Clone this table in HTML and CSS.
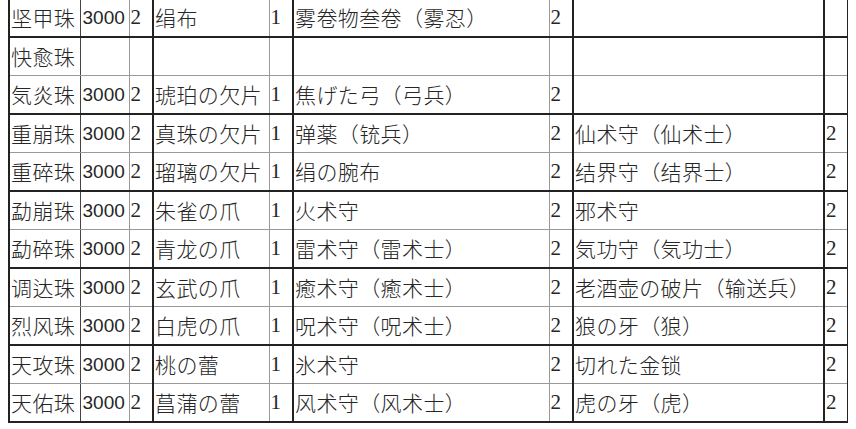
FILE: index.html
```html
<!DOCTYPE html>
<html lang="ja">
<head>
<meta charset="utf-8">
<title>珠</title>
<link rel="stylesheet" href="styles.css">
</head>
<body>
<table class="grid">
<colgroup>
<col class="c1"><col class="c2"><col class="c3"><col class="c4"><col class="c5"><col class="c6"><col class="c7"><col class="c8"><col class="c9">
</colgroup>
<tbody>
<tr class="dk"><td>坚甲珠</td><td class="n">3000</td><td class="d">2</td><td>绢布</td><td class="d">1</td><td>雾卷物叁卷（雾忍）</td><td class="d">2</td><td></td><td class="d"></td></tr>
<tr class="lt"><td>快愈珠</td><td class="n"></td><td class="d"></td><td></td><td class="d"></td><td></td><td class="d"></td><td></td><td class="d"></td></tr>
<tr class="dk"><td>気炎珠</td><td class="n">3000</td><td class="d">2</td><td>琥珀の欠片</td><td class="d">1</td><td>焦げた弓（弓兵）</td><td class="d">2</td><td></td><td class="d"></td></tr>
<tr class="lt"><td>重崩珠</td><td class="n">3000</td><td class="d">2</td><td>真珠の欠片</td><td class="d">1</td><td>弹薬（铳兵）</td><td class="d">2</td><td>仙术守（仙术士）</td><td class="d">2</td></tr>
<tr class="dk"><td>重碎珠</td><td class="n">3000</td><td class="d">2</td><td>瑠璃の欠片</td><td class="d">1</td><td>绢の腕布</td><td class="d">2</td><td>结界守（结界士）</td><td class="d">2</td></tr>
<tr class="lt"><td>勐崩珠</td><td class="n">3000</td><td class="d">2</td><td>朱雀の爪</td><td class="d">1</td><td>火术守</td><td class="d">2</td><td>邪术守</td><td class="d">2</td></tr>
<tr class="dk"><td>勐碎珠</td><td class="n">3000</td><td class="d">2</td><td>青龙の爪</td><td class="d">1</td><td>雷术守（雷术士）</td><td class="d">2</td><td>気功守（気功士）</td><td class="d">2</td></tr>
<tr class="lt"><td>调达珠</td><td class="n">3000</td><td class="d">2</td><td>玄武の爪</td><td class="d">1</td><td>癒术守（癒术士）</td><td class="d">2</td><td>老酒壶の破片（输送兵）</td><td class="d">2</td></tr>
<tr class="dk"><td>烈风珠</td><td class="n">3000</td><td class="d">2</td><td>白虎の爪</td><td class="d">1</td><td>呪术守（呪术士）</td><td class="d">2</td><td>狼の牙（狼）</td><td class="d">2</td></tr>
<tr class="lt"><td>天攻珠</td><td class="n">3000</td><td class="d">2</td><td>桃の蕾</td><td class="d">1</td><td>氷术守</td><td class="d">2</td><td>切れた金锁</td><td class="d">2</td></tr>
<tr class="dk"><td>天佑珠</td><td class="n">3000</td><td class="d">2</td><td>菖蒲の蕾</td><td class="d">1</td><td>风术守（风术士）</td><td class="d">2</td><td>虎の牙（虎）</td><td class="d">2</td></tr>
</tbody>
</table>
</body>
</html>
```
FILE: styles.css
```css
html, body {
  background: #ffffff;
}
body {
  margin: -2px 8px 0 8px;
  font-family: "Noto Sans CJK JP", "Noto Sans CJK SC", sans-serif;
  font-weight: 300;
  color: #262626;
}
.grid {
  border-collapse: collapse;
  table-layout: fixed;
  width: 840px;
  font-size: 21px;
  letter-spacing: 0.4px;
}
.c1 { width: 71px; }
.c2 { width: 49px; }
.c3 { width: 24px; }
.c4 { width: 116px; }
.c5 { width: 24px; }
.c6 { width: 256px; }
.c7 { width: 24px; }
.c8 { width: 251px; }
.c9 { width: 24px; }
.grid td {
  height: 37px;
  padding: 0 0 0 1px;
  white-space: nowrap;
  overflow: hidden;
  vertical-align: middle;
  line-height: 1;
  border-left: 2px solid #222;
  border-right: 2px solid #222;
}
.grid td:nth-child(3),
.grid td:nth-child(5),
.grid td:nth-child(7) {
  border-left: 1px solid #999;
}
.grid td:nth-child(2),
.grid td:nth-child(4),
.grid td:nth-child(6) {
  border-right: 1px solid #999;
}
.grid td:nth-child(2) {
  border-left: 1px solid #444;
}
.grid td:nth-child(1) {
  border-right: 1px solid #444;
}
.grid tr.dk td { border-bottom: 2px solid #222; }
.grid tr.lt td { border-bottom: 1px solid #999; }
.grid tr:first-child td { border-top: 1px solid #999; }
.grid td.n {
  font-family: "Liberation Sans", sans-serif;
  font-weight: 400;
  font-size: 19px;
  letter-spacing: 0;
  padding-left: 2px;
}
.grid td.d {
  font-family: "Liberation Serif", serif;
  font-weight: 400;
  font-size: 21px;
  letter-spacing: 0;
  padding-left: 1px;
}
```
